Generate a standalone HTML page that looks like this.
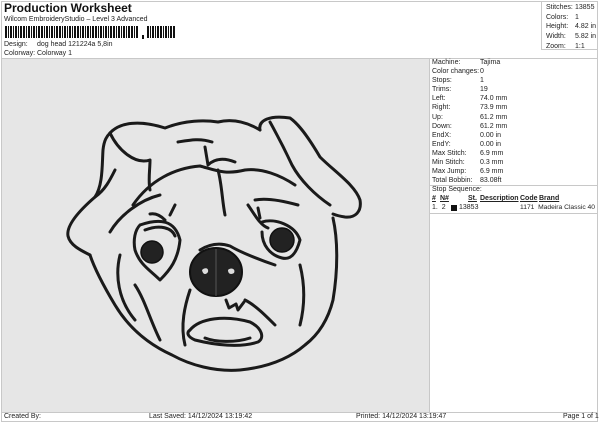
<!DOCTYPE html>
<html><head><meta charset="utf-8"><style>
*{margin:0;padding:0;box-sizing:border-box}
body{width:600px;height:424px;background:#fff;font-family:"Liberation Sans",sans-serif;color:#222;position:relative;overflow:hidden;font-size:7px}
.a{position:absolute;white-space:nowrap}
.bx{position:absolute;border:1px solid #c8c8c8}
</style></head><body>
<div class="bx" style="left:1px;top:1px;width:597px;height:421px"></div>
<div class="a" style="left:4px;top:1px;font-size:12px;font-weight:bold;color:#111">Production Worksheet</div>
<div class="a" style="left:4px;top:16px;font-size:7px">Wilcom EmbroideryStudio – Level 3 Advanced</div>
<svg class="a" style="left:5px;top:26px" width="172" height="14">
<g fill="#111">
<rect x="0" y="0" width="2" height="12"/><rect x="3" y="0" width="1" height="12"/><rect x="5" y="0" width="2" height="12"/><rect x="8" y="0" width="1" height="12"/><rect x="10" y="0" width="2" height="12"/><rect x="13" y="0" width="1" height="12"/><rect x="15" y="0" width="2" height="12"/><rect x="18" y="0" width="2" height="12"/><rect x="21" y="0" width="1" height="12"/><rect x="23" y="0" width="2" height="12"/><rect x="26" y="0" width="1" height="12"/><rect x="28" y="0" width="2" height="12"/><rect x="31" y="0" width="1" height="12"/><rect x="33" y="0" width="2" height="12"/><rect x="36" y="0" width="2" height="12"/><rect x="39" y="0" width="1" height="12"/><rect x="41" y="0" width="2" height="12"/><rect x="44" y="0" width="1" height="12"/><rect x="46" y="0" width="2" height="12"/><rect x="49" y="0" width="1" height="12"/><rect x="51" y="0" width="2" height="12"/><rect x="54" y="0" width="2" height="12"/><rect x="57" y="0" width="1" height="12"/><rect x="59" y="0" width="2" height="12"/><rect x="62" y="0" width="1" height="12"/><rect x="64" y="0" width="2" height="12"/><rect x="67" y="0" width="1" height="12"/><rect x="69" y="0" width="2" height="12"/><rect x="72" y="0" width="2" height="12"/><rect x="75" y="0" width="1" height="12"/><rect x="77" y="0" width="2" height="12"/><rect x="80" y="0" width="1" height="12"/><rect x="82" y="0" width="2" height="12"/><rect x="85" y="0" width="1" height="12"/><rect x="87" y="0" width="2" height="12"/><rect x="90" y="0" width="2" height="12"/><rect x="93" y="0" width="1" height="12"/><rect x="95" y="0" width="2" height="12"/><rect x="98" y="0" width="1" height="12"/><rect x="100" y="0" width="2" height="12"/><rect x="103" y="0" width="1" height="12"/><rect x="105" y="0" width="2" height="12"/><rect x="108" y="0" width="2" height="12"/><rect x="111" y="0" width="1" height="12"/><rect x="113" y="0" width="2" height="12"/><rect x="116" y="0" width="1" height="12"/><rect x="118" y="0" width="2" height="12"/><rect x="121" y="0" width="1" height="12"/><rect x="123" y="0" width="2" height="12"/><rect x="126" y="0" width="2" height="12"/><rect x="129" y="0" width="1" height="12"/><rect x="131" y="0" width="2" height="12"/>
<rect x="137" y="9" width="2" height="4"/>
<rect x="142" y="0" width="2" height="12"/><rect x="145" y="0" width="1" height="12"/><rect x="147" y="0" width="2" height="12"/><rect x="150" y="0" width="1" height="12"/><rect x="152" y="0" width="2" height="12"/><rect x="155" y="0" width="2" height="12"/><rect x="158" y="0" width="1" height="12"/><rect x="160" y="0" width="2" height="12"/><rect x="163" y="0" width="1" height="12"/><rect x="165" y="0" width="2" height="12"/><rect x="168" y="0" width="2" height="12"/>
</g></svg>
<div class="a" style="left:4px;top:41px">Design:</div><div class="a" style="left:37px;top:41px">dog head 121224a 5,8in</div>
<div class="a" style="left:4px;top:50px">Colorway:</div><div class="a" style="left:37px;top:50px">Colorway 1</div>
<div class="bx" style="left:541px;top:1px;width:57px;height:49px;border-top:none;border-right:none"></div>
<div class="a" style="left:546px;top:3px;line-height:9.7px">Stitches:<br>Colors:<br>Height:<br>Width:<br>Zoom:</div>
<div class="a" style="left:575px;top:3px;line-height:9.7px">13855<br>1<br>4.82 in<br>5.82 in<br>1:1</div>
<div class="a" style="left:1px;top:58px;width:597px;border-top:1px solid #c8c8c8"></div>
<div class="a" style="left:2px;top:59px;width:427px;height:353px;background:#e6e6e6"></div>
<div class="a" style="left:429px;top:59px;height:353px;border-left:1px solid #c8c8c8"></div>
<div class="a" style="left:432px;top:58px;line-height:9.1px">Machine:<br>Color changes:<br>Stops:<br>Trims:<br>Left:<br>Right:<br>Up:<br>Down:<br>EndX:<br>EndY:<br>Max Stitch:<br>Min Stitch:<br>Max Jump:<br>Total Bobbin:</div>
<div class="a" style="left:480px;top:58px;line-height:9.1px">Tajima<br>0<br>1<br>19<br>74.0 mm<br>73.9 mm<br>61.2 mm<br>61.2 mm<br>0.00 in<br>0.00 in<br>6.9 mm<br>0.3 mm<br>6.9 mm<br>83.08ft</div>
<div class="a" style="left:430px;top:185px;width:168px;border-top:1px solid #c8c8c8"></div>
<div class="a" style="left:432px;top:186px">Stop Sequence:</div>
<div class="a" style="left:432px;top:195px;font-weight:bold;text-decoration:underline">#</div>
<div class="a" style="left:440px;top:195px;font-weight:bold;text-decoration:underline">N#</div>
<div class="a" style="left:468px;top:195px;font-weight:bold;text-decoration:underline">St.</div>
<div class="a" style="left:480px;top:195px;font-weight:bold;text-decoration:underline">Description</div>
<div class="a" style="left:520px;top:195px;font-weight:bold;text-decoration:underline">Code</div>
<div class="a" style="left:539px;top:195px;font-weight:bold;text-decoration:underline">Brand</div>
<div class="a" style="left:432px;top:204px">1.&nbsp; 2</div>
<div class="a" style="left:451px;top:205px;width:6px;height:6px;background:#111"></div>
<div class="a" style="left:459px;top:204px">13853</div>
<div class="a" style="left:520px;top:204px;font-size:6.7px">1171&nbsp; Madeira Classic 40</div>
<div class="a" style="left:430px;top:213px;width:168px;border-top:1px solid #c8c8c8"></div>
<div class="a" style="left:1px;top:412px;width:597px;border-top:1px solid #c8c8c8"></div>
<div class="a" style="left:4px;top:413px">Created By:</div>
<div class="a" style="left:149px;top:413px">Last Saved: 14/12/2024 13:19:42</div>
<div class="a" style="left:356px;top:413px">Printed: 14/12/2024 13:19:47</div>
<div class="a" style="left:563px;top:413px">Page 1 of 1</div>
<svg class="a" style="left:0;top:0" width="430" height="412" viewBox="0 0 430 412">
<g fill="none" stroke="#1a1a1a" stroke-width="3" stroke-linejoin="round" stroke-linecap="round">
<path d="M110,133 C120,122 140,120 165,128 C185,120 205,120 218,122 C235,118 250,124 260,130"/>
<path d="M260,130 C258,120 270,115 290,118 C300,125 310,140 320,157 C335,172 355,185 360,200 C362,212 355,218 345,217 C338,216 333,214 333,214"/>
<path d="M333,218 C338,240 338,270 333,300 C328,320 318,335 305,345 C290,358 270,367 240,370 C215,372 190,365 172,355 C150,345 130,330 115,305 C103,285 95,270 90,255"/>
<path d="M90,255 C80,250 70,245 68,236 C66,225 80,210 95,197 C103,185 102,165 103,150 C104,140 107,136 110,133"/>
<path d="M110,133 C118,150 135,165 150,160 M150,160 C150,170 148,180 150,190"/>
<path d="M95,197 C105,190 110,180 115,170"/>
<path d="M178,142 C190,140 200,138 212,142 M205,147 L208,165 C215,158 225,158 235,162"/>
<path d="M270,122 C280,140 285,150 292,165 C300,180 315,195 330,205"/>
<path d="M133,205 C150,180 175,168 200,166 C215,170 225,175 245,170 C262,168 280,175 295,185"/>
<path d="M110,232 C120,215 140,200 160,195"/>
<path d="M140,225 C160,218 175,220 180,240 C178,260 170,270 160,280 C150,270 140,265 135,250 C133,240 135,230 140,225"/>
<path d="M145,230 C160,224 172,228 175,236 M165,220 C160,215 155,213 150,214 M170,215 L175,205"/>
<path d="M218,170 C222,185 222,200 225,215"/>
<path d="M248,205 C255,215 260,225 268,228"/>
<path d="M262,222 C275,218 295,225 300,240 C296,255 290,260 282,258 C270,255 262,245 262,232"/>
<path d="M255,200 C265,198 280,200 298,205 M258,208 L260,218"/>
<path d="M200,250 C208,245 218,242 230,246 C240,252 260,260 275,265"/>
<path d="M120,255 C115,275 118,300 135,320 M135,285 C145,300 150,320 160,340"/>
<path d="M190,290 C185,305 180,325 185,345"/>
<path d="M245,300 C255,305 265,315 275,325"/>
<path d="M300,265 C305,285 305,305 300,325"/>
<path d="M190,330 C200,318 225,315 250,322 C262,328 265,338 258,342 C240,348 215,345 195,340 C188,337 186,333 190,330"/>
<path d="M205,338 C215,342 235,343 250,338"/>
<path d="M226,300 L229,308 L236,304 L238,310 L244,302"/>
</g>
<ellipse cx="216" cy="272" rx="26" ry="24" fill="#222" stroke="#111" stroke-width="2"/>
<path d="M216,249 L216,296" stroke="#555" stroke-width="1" fill="none"/>
<path d="M202,270 c3,-3 7,-2 6,2 c-2,3 -5,3 -6,-2z M228,270 c3,-3 8,-1 6,3 c-3,2 -6,1 -6,-3z" fill="#ddd"/>
<circle cx="152" cy="252" r="11" fill="#222" stroke="#111" stroke-width="1.5"/>
<circle cx="282" cy="240" r="12" fill="#222" stroke="#111" stroke-width="1.5"/>
</svg>
</body></html>
